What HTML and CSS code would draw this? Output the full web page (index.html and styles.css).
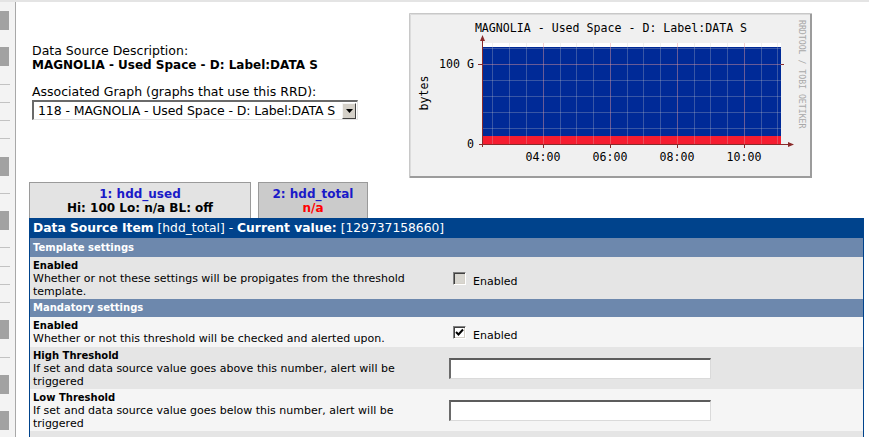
FILE: index.html
```html
<!DOCTYPE html>
<html>
<head>
<meta charset="utf-8">
<title>Thresholds</title>
<link rel="stylesheet" href="styles.css">
</head>
<body>
<div class="topline"></div>
<div class="page">
  <nav class="strip">
    <div class="b"></div><div></div><div class="b"></div><div></div>
    <div class="l"></div><div class="l"></div><div class="l"></div><div class="l"></div>
    <div class="b"></div><div></div><div class="l"></div><div class="b"></div><div></div>
    <div class="l"></div><div class="l"></div><div class="l"></div><div class="l"></div>
    <div class="b"></div><div></div><div class="l"></div><div class="b"></div><div></div>
    <div class="b"></div>
  </nav>
  <main class="main">
    <div class="top">
      <div class="info">
        <div class="line">Data Source Description:</div>
        <div class="line strong">MAGNOLIA - Used Space - D: Label:DATA S</div>
        <div class="line gap">Associated Graph (graphs that use this RRD):</div>
        <div class="select">
          <span class="select-text">118 - MAGNOLIA - Used Space - D: Label:DATA S</span>
          <span class="select-btn"><svg width="7" height="4" viewBox="0 0 7 4"><path d="M0 0H7L3.5 4Z" fill="#000"/></svg></span>
        </div>
      </div>
      <div class="graph">
        <svg width="403" height="165" viewBox="0 0 403 165">
          <rect x="0" y="0" width="403" height="165" fill="#f0f0f0"/>
          <path d="M0.5 165V0.5H403" stroke="#c8c8c8" fill="none"/>
          <path d="M1.5 165V1.5H402" stroke="#dcdcdc" fill="none"/>
          <path d="M1 164H402V1" stroke="#9c9c9c" stroke-width="2" fill="none"/>
          <text x="202" y="19" class="g-title" text-anchor="middle">MAGNOLIA - Used Space - D: Label:DATA S</text>
          <rect x="73" y="30" width="299" height="101" fill="#ffffff"/>
          <rect x="73" y="34" width="299" height="89" fill="#002A97"/>
          <rect x="73" y="123" width="299" height="8" fill="#F51D30"/>
          <g stroke="rgba(200,200,200,0.28)" stroke-width="1">
            <path d="M83.5 30V131M100.5 30V131M117.5 30V131M151.5 30V131M167.5 30V131M184.5 30V131M218.5 30V131M234.5 30V131M251.5 30V131M285.5 30V131M301.5 30V131M318.5 30V131M352.5 30V131M368.5 30V131"/>
            <path d="M73 35.5H372M73 67.5H372M73 83.5H372M73 99.5H372M73 115.5H372"/>
          </g>
          <g stroke="rgba(230,150,150,0.45)" stroke-width="1">
            <path d="M134.5 30V131M201.5 30V131M268.5 30V131M335.5 30V131M73 51.5H372"/>
          </g>
          <g stroke="#8a2a2a" stroke-width="1" fill="#8a2a2a">
            <path d="M73.5 134V27M70 131.5H380M69 51.5H73M134.5 131V135M201.5 131V135M268.5 131V135M335.5 131V135M372 51.5H375"/>
            <path d="M71 28L73.5 22L76 28Z" stroke="none"/>
            <path d="M379 129L385 131.5L379 134Z" stroke="none"/>
          </g>
          <text x="65" y="55" class="g-lbl" text-anchor="end">100 G</text>
          <text x="65" y="135" class="g-lbl" text-anchor="end">0</text>
          <text x="134" y="148" class="g-lbl" text-anchor="middle">04:00</text>
          <text x="201" y="148" class="g-lbl" text-anchor="middle">06:00</text>
          <text x="268" y="148" class="g-lbl" text-anchor="middle">08:00</text>
          <text x="335" y="148" class="g-lbl" text-anchor="middle">10:00</text>
          <text x="0" y="0" class="g-lbl" text-anchor="middle" transform="translate(19 80) rotate(-90)">bytes</text>
          <text x="0" y="0" class="g-wm" transform="translate(390 7) rotate(90)">RRDTOOL / TOBI OETIKER</text>
        </svg>
      </div>
    </div>
    <div class="tabs">
      <div class="tab tab-a">
        <div class="tab-name">1: hdd_used</div>
        <div>Hi: 100 Lo: n/a BL: off</div>
      </div>
      <div class="tab tab-b">
        <div class="tab-name">2: hdd_total</div>
        <div class="tab-na">n/a</div>
      </div>
    </div>
    <div class="panel">
      <div class="ph"><b>Data Source Item</b> [hdd_total] - <b>Current value:</b> [129737158660]</div>
      <div class="sec">Template settings</div>
      <div class="row dark">
        <div class="c1">
          <div class="t">Enabled</div>
          <div class="d">Whether or not these settings will be propigates from the threshold template.</div>
        </div>
        <div class="c2">
          <span class="cb off"></span><span class="cbl">Enabled</span>
        </div>
      </div>
      <div class="sec short">Mandatory settings</div>
      <div class="row light">
        <div class="c1">
          <div class="t">Enabled</div>
          <div class="d">Whether or not this threshold will be checked and alerted upon.</div>
        </div>
        <div class="c2">
          <span class="cb on"><svg width="9" height="9" viewBox="0 0 9 9"><path d="M1 4L3.5 6.5L8 1.5" stroke="#000" stroke-width="2" fill="none"/></svg></span><span class="cbl">Enabled</span>
        </div>
      </div>
      <div class="row dark">
        <div class="c1">
          <div class="t">High Threshold</div>
          <div class="d">If set and data source value goes above this number, alert will be triggered</div>
        </div>
        <div class="c2"><input class="txt" type="text"></div>
      </div>
      <div class="row light">
        <div class="c1">
          <div class="t">Low Threshold</div>
          <div class="d">If set and data source value goes below this number, alert will be triggered</div>
        </div>
        <div class="c2"><input class="txt" type="text"></div>
      </div>
      <div class="row-tail"></div>
    </div>
  </main>
</div>
</body>
</html>
```
FILE: styles.css
```css
html, body {
  margin: 0;
  padding: 0;
  background: #ffffff;
  width: 869px;
  height: 437px;
  overflow: hidden;
  font-family: "DejaVu Sans", Verdana, sans-serif;
  color: #000;
}
.topline {
  height: 2px;
  background: #e4e4e4;
}
.page {
  display: flex;
  height: 435px;
}
.strip {
  width: 15px;
  flex: none;
  background: #f3f3f3;
  border-right: 1px solid #a8a8a8;
  display: grid;
  grid-auto-rows: 18.2px;
  align-content: start;
  padding-top: 9px;
  box-sizing: content-box;
  overflow: hidden;
}
.strip .b {
  width: 9px;
  height: 19px;
  background: #a2a2a2;
}
.strip .l {
  width: 10px;
  border-top: 1px solid #c2c2c2;
}
.main {
  flex: 1;
  padding: 11px 5px 0 13px;
  min-width: 0;
}
.top {
  display: flex;
  height: 165px;
  margin-bottom: 4px;
}
.info {
  width: 380px;
  flex: none;
  padding: 31px 0 0 3px;
  box-sizing: border-box;
  font-size: 12.5px;
}
.line {
  line-height: 14px;
  white-space: nowrap;
}
.strong { font-weight: bold; font-size: 12px; }
.gap { margin-top: 13px; }
.select {
  margin-top: 1px;
  width: 326px;
  height: 20px;
  box-sizing: border-box;
  display: flex;
  align-items: center;
  background: #fff;
  border-style: solid;
  border-width: 2px 1px 1px 2px;
  border-color: #6a6a6a #e4e4e4 #e4e4e4 #6a6a6a;
}
.select-text {
  flex: 1;
  padding-left: 4px;
  white-space: nowrap;
  overflow: hidden;
  font-size: 12.5px;
  letter-spacing: -0.1px;
}
.select-btn {
  width: 14px;
  height: 16px;
  margin-right: 1px;
  box-sizing: border-box;
  background: #d4d0c8;
  border-style: solid;
  border-width: 1px;
  border-color: #f4f4f4 #404040 #404040 #f4f4f4;
  display: flex;
  align-items: center;
  justify-content: center;
}
.select-btn svg { display: block; }
.graph { flex: none; }
.graph svg { display: block; }
.g-title {
  font-family: "DejaVu Sans Mono", monospace;
  font-size: 11.6px;
  fill: #000;
}
.g-lbl {
  font-family: "DejaVu Sans Mono", monospace;
  font-size: 11.6px;
  fill: #000;
}
.g-wm {
  font-family: "DejaVu Sans Mono", monospace;
  font-size: 8.2px;
  fill: #a8a8a8;
}
.tabs {
  display: flex;
  gap: 7px;
  height: 36px;
}
.tab {
  box-sizing: border-box;
  height: 36px;
  border: 1px solid #9a9a9a;
  border-bottom: none;
  text-align: center;
  font-weight: bold;
  font-size: 12px;
  line-height: 14px;
  padding-top: 4px;
  white-space: nowrap;
}
.tab-a { width: 222px; background: #e3e3e3; }
.tab-b { width: 110px; background: #cbcbcb; }
.tab-name { color: #1a1ac8; }
.tab-na { color: #ff0000; }
.panel {
  border-left: 1px solid #00438c;
  border-right: 1px solid #00438c;
}
.ph {
  height: 20px;
  background: #00438c;
  color: #fff;
  font-size: 12.3px;
  line-height: 20px;
  padding-left: 3px;
  white-space: nowrap;
}
.sec {
  height: 19px;
  line-height: 19px;
  background: #6d88ad;
  color: #fff;
  font-weight: bold;
  font-size: 10px;
  padding-left: 3px;
}
.sec.short {
  height: 18px;
  line-height: 18px;
}
.row {
  display: grid;
  grid-template-columns: 419px 1fr;
  min-height: 30px;
}
.row.dark { background: #e5e5e5; }
.row.light { background: #f5f5f5; }
.row-tail {
  height: 6px;
  background: #e5e5e5;
}
.c1 {
  padding: 2px 4px 1px 3px;
  font-size: 11px;
  line-height: 13px;
}
.t { font-weight: bold; font-size: 10px; }
.c2 {
  display: flex;
  align-items: center;
}
.cb {
  width: 13px;
  height: 13px;
  box-sizing: border-box;
  margin: 3px 3px 3px 4px;
  border: 1px solid;
  border-color: #808080 #ffffff #ffffff #808080;
  box-shadow: inset 1px 1px 0 #404040, inset -1px -1px 0 #d4d0c8;
  display: flex;
  align-items: center;
  justify-content: center;
}
.cb.off { background: #d8d6d0; }
.cb.on { background: #ffffff; }
.cb svg { display: block; }
.cbl {
  font-size: 11px;
  margin-left: 4px;
  margin-top: 6px;
}
.txt {
  width: 262px;
  height: 21px;
  box-sizing: border-box;
  margin: 0;
  padding: 1px 3px;
  background: #fff;
  border-style: solid;
  border-width: 2px 1px 1px 2px;
  border-color: #5c5c5c #dadada #dadada #6a6a6a;
  outline: none;
  font-family: "DejaVu Sans", sans-serif;
  font-size: 11px;
}
```
